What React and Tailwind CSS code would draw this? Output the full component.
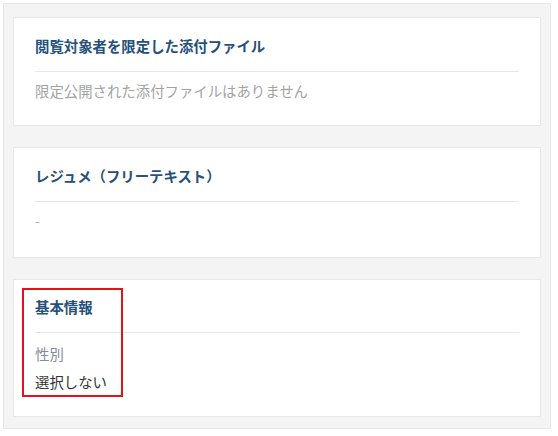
import React from "react";

const font = { fontFamily: '"Noto Sans CJK JP", "Noto Sans", sans-serif' };

const Card = ({ title, children, className = "" }) => (
  <div className={`relative bg-white border border-[#e8e8e8] px-[21px] ${className}`}>
    <h3 className="text-[14.4px] leading-[20px] font-bold text-[#27507a]">{title}</h3>
    <div className="h-px bg-[#e6e6e6] mt-[15px]" />
    {children}
  </div>
);

const App = () => {
  return (
    <div className="min-h-screen bg-white pt-[3px] pl-[3px]" style={font}>
      <div className="w-[548px] h-[426px] bg-[#f4f4f4] border border-[#e6e6e6] pt-[13px] px-[9px] flex flex-col gap-[21px]">
        <Card title="閲覧対象者を限定した添付ファイル" className="pt-[18px] pb-[24px]">
          <p className="mt-[9px] text-[14.4px] leading-[20px] text-[#a3a3a3]">
            限定公開された添付ファイルはありません
          </p>
        </Card>

        <Card title="レジュメ（フリーテキスト）" className="pt-[18px] pb-[26px]">
          <p className="mt-[9px] text-[14.4px] leading-[20px] text-[#a8adb5]">-</p>
        </Card>

        <Card title="基本情報" className="pt-[17px] pb-[24px]">
          <p className="mt-[11px] text-[14.4px] leading-[20px] text-[#828c9b]">性別</p>
          <p className="mt-[8px] text-[14.4px] leading-[20px] text-[#333333]">選択しない</p>
          <div className="absolute left-[8px] top-[8px] w-[101px] h-[109px] border-2 border-[#e8101a] pointer-events-none" />
        </Card>
      </div>
    </div>
  );
};

export default App;
